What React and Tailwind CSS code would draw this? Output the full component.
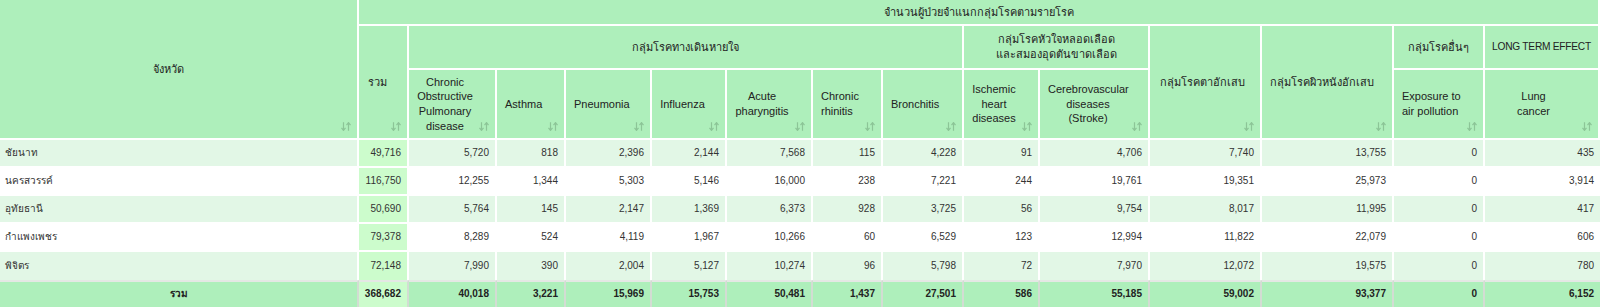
import React from "react";

const widths = [359, 50, 88, 69, 86, 75, 86, 70, 81, 76, 110, 112, 132, 91, 115];

const rows = [
  ["ชัยนาท", "49,716", "5,720", "818", "2,396", "2,144", "7,568", "115", "4,228", "91", "4,706", "7,740", "13,755", "0", "435"],
  ["นครสวรรค์", "116,750", "12,255", "1,344", "5,303", "5,146", "16,000", "238", "7,221", "244", "19,761", "19,351", "25,973", "0", "3,914"],
  ["อุทัยธานี", "50,690", "5,764", "145", "2,147", "1,369", "6,373", "928", "3,725", "56", "9,754", "8,017", "11,995", "0", "417"],
  ["กำแพงเพชร", "79,378", "8,289", "524", "4,119", "1,967", "10,266", "60", "6,529", "123", "12,994", "11,822", "22,079", "0", "606"],
  ["พิจิตร", "72,148", "7,990", "390", "2,004", "5,127", "10,274", "96", "5,798", "72", "7,970", "12,072", "19,575", "0", "780"],
];

const total = ["รวม", "368,682", "40,018", "3,221", "15,969", "15,753", "50,481", "1,437", "27,501", "586", "55,185", "59,002", "93,377", "0", "6,152"];

function SortIcon() {
  return (
    <svg
      className="absolute right-[6px] bottom-[7px]"
      width="10"
      height="9"
      viewBox="0 0 10 9"
      fill="none"
      stroke="#8cc597"
      strokeWidth="1.2"
    >
      <path d="M2.5 0.3 V8.3 M0.5 5.8 L2.5 8.4 L4.5 5.8" />
      <path d="M7.5 8.7 V0.7 M5.5 3.2 L7.5 0.6 L9.5 3.2" />
    </svg>
  );
}

const th = "relative bg-[#aeefbb] border-r-2 border-b-2 border-white font-normal text-[#222] align-middle";

export default function App() {
  return (
    <div className="w-[1600px] h-[307px] overflow-hidden bg-white font-['Liberation_Sans',Arial,sans-serif]">
      <table className="w-[1600px] table-fixed border-separate border-spacing-0 text-[11px] leading-[14.6px]">
        <colgroup>
          {widths.map((w, i) => (
            <col key={i} style={{ width: w }} />
          ))}
        </colgroup>
        <thead>
          <tr>
            <th rowSpan={3} className={`${th} text-center pl-[10px] pr-[30px]`}>
              จังหวัด
              <SortIcon />
            </th>
            <th colSpan={14} className={`${th} border-r-0 h-[26px] text-center px-[10px] whitespace-nowrap`}>
              จำนวนผู้ป่วยจำแนกกลุ่มโรคตามรายโรค
            </th>
          </tr>
          <tr>
            <th rowSpan={2} className={`${th} text-left pl-[9px] pr-[4px] whitespace-nowrap`}>
              รวม
              <SortIcon />
            </th>
            <th colSpan={7} className={`${th} h-[44px] text-center px-[10px] whitespace-nowrap`}>
              กลุ่มโรคทางเดินหายใจ
            </th>
            <th colSpan={2} className={`${th} text-center px-[10px] whitespace-nowrap`}>
              กลุ่มโรคหัวใจหลอดเลือด
              <br />
              และสมองอุดตันขาดเลือด
            </th>
            <th rowSpan={2} className={`${th} text-left pl-[10px] pr-[4px] whitespace-nowrap`}>
              กลุ่มโรคตาอักเสบ
              <SortIcon />
            </th>
            <th rowSpan={2} className={`${th} text-left pl-[8px] pr-[4px] whitespace-nowrap`}>
              กลุ่มโรคผิวหนังอักเสบ
              <SortIcon />
            </th>
            <th className={`${th} text-center px-[4px] whitespace-nowrap`}>กลุ่มโรคอื่นๆ</th>
            <th className={`${th} border-r-0 text-center px-[2px] whitespace-nowrap text-[10.2px] tracking-[-0.25px]`}>
              LONG TERM EFFECT
            </th>
          </tr>
          <tr>
            <th className={`${th} h-[70px] text-center pl-[8px] pr-[22px]`}>
              Chronic Obstructive Pulmonary disease
              <SortIcon />
            </th>
            <th className={`${th} text-left pl-[8px] pr-[20px]`}>
              Asthma
              <SortIcon />
            </th>
            <th className={`${th} text-left pl-[8px] pr-[20px]`}>
              Pneumonia
              <SortIcon />
            </th>
            <th className={`${th} text-center pl-[8px] pr-[20px]`}>
              Influenza
              <SortIcon />
            </th>
            <th className={`${th} text-center pl-[8px] pr-[22px]`}>
              Acute pharyngitis
              <SortIcon />
            </th>
            <th className={`${th} text-left pl-[8px] pr-[20px]`}>
              Chronic rhinitis
              <SortIcon />
            </th>
            <th className={`${th} text-left pl-[8px] pr-[20px]`}>
              Bronchitis
              <SortIcon />
            </th>
            <th className={`${th} text-center pl-[8px] pr-[22px]`}>
              Ischemic heart diseases
              <SortIcon />
            </th>
            <th className={`${th} text-center pl-[8px] pr-[20px]`}>
              Cerebrovascular diseases (Stroke)
              <SortIcon />
            </th>
            <th className={`${th} text-left pl-[8px] pr-[22px]`}>
              Exposure to air pollution
              <SortIcon />
            </th>
            <th className={`${th} border-r-0 text-center pl-[10px] pr-[26px]`}>
              Lung
              <br />
              cancer
              <SortIcon />
            </th>
          </tr>
        </thead>
        <tbody className="text-[10px] text-[#333]">
          {rows.map((r, ri) => {
            const odd = ri % 2 === 0;
            const last = ri === rows.length - 1;
            return (
              <tr key={ri}>
                {r.map((v, ci) => {
                  const bg = ci === 1 ? "bg-[#ccfccc]" : odd ? "bg-[#e2f7e6]" : "bg-white";
                  const align = ci === 0 ? "text-left pl-[5px]" : "text-right pr-[6px]";
                  const br = ci === r.length - 1 ? "" : "border-r-2";
                  const bb = last ? "" : "border-b-2";
                  return (
                    <td key={ci} className={`${bg} ${align} ${br} ${bb} border-white h-[28px] align-middle`}>
                      {v}
                    </td>
                  );
                })}
              </tr>
            );
          })}
        </tbody>
        <tfoot className="text-[10px] text-[#222] font-bold">
          <tr>
            {total.map((v, ci) => {
              const bg = ci === 1 ? "bg-[#ccfccc]" : "bg-[#aeefbb]";
              const align = ci === 0 ? "text-center" : "text-right pr-[6px]";
              const br = ci === total.length - 1 ? "" : "border-r-2 border-r-[#d3dcd3]";
              return (
                <td key={ci} className={`${bg} ${align} ${br} border-t-2 border-t-[#e4e8e4] h-[27px] align-middle`}>
                  {v}
                </td>
              );
            })}
          </tr>
        </tfoot>
      </table>
    </div>
  );
}
